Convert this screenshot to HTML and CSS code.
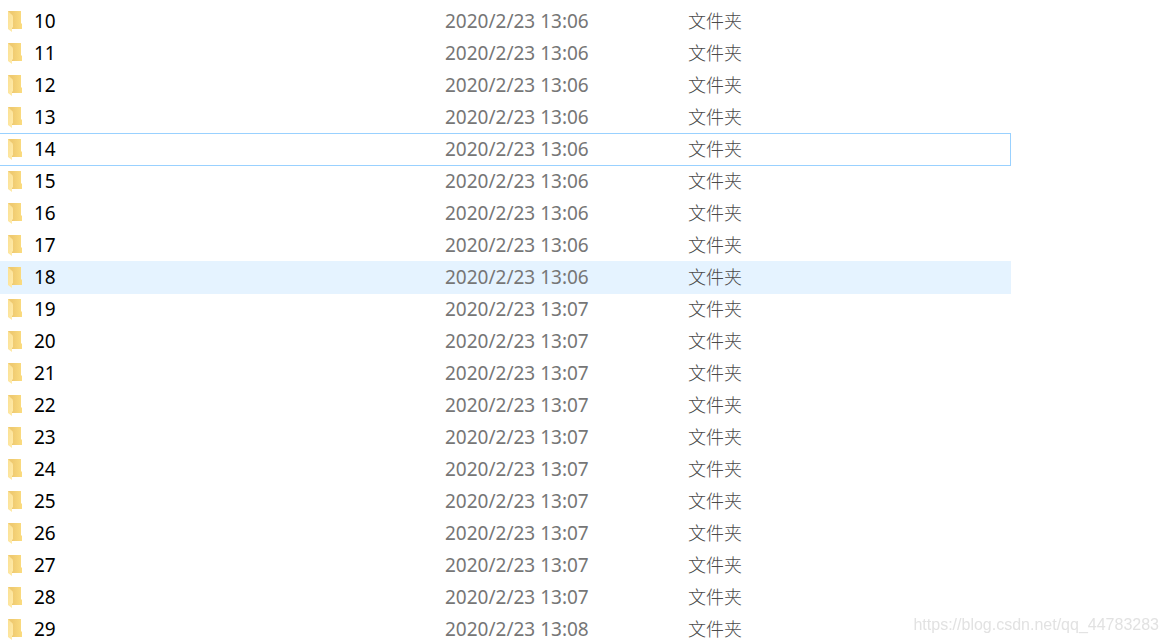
FILE: index.html
```html
<!DOCTYPE html>
<html lang="zh-CN">
<head>
    <meta charset="UTF-8">
    <meta name="viewport" content="width=device-width, initial-scale=1.0">
    <title>文件夹</title>
    <link rel="stylesheet" href="styles.css">
</head>
<body>
    <svg class="defs" aria-hidden="true">
        <defs>
            <linearGradient id="back" x1="0" y1="0" x2="1" y2="0">
                <stop offset="0.3" stop-color="#efca70"/>
                <stop offset="1" stop-color="#fbdc80"/>
            </linearGradient>
            <linearGradient id="front" x1="0" y1="0" x2="1" y2="1">
                <stop offset="0" stop-color="#fbe092"/>
                <stop offset="1" stop-color="#ffebac"/>
            </linearGradient>
            <symbol id="folder" viewBox="0 0 14 22">
                <path d="M0 1H13V13L14 14V19H0z" fill="url(#back)"/>
                <path d="M0 1L3 4Q5 5 5 7V17L4 18V22L0 19z" fill="url(#front)"/>
            </symbol>
        </defs>
    </svg>

    <main class="explorer">
        <table class="files">
            <colgroup>
                <col class="col-name">
                <col class="col-date">
                <col class="col-type">
            </colgroup>
            <tbody id="rows"></tbody>
        </table>
    </main>

    <div class="watermark">https://blog.csdn.net/qq_44783283</div>

    <script>
        const rows = document.getElementById('rows');
        const states = { 14: 'focused', 18: 'hovered' };

        function getTime(name) {
            if (name < 19) return '13:06';
            if (name < 29) return '13:07';
            return '13:08';
        }

        for (let name = 10; name <= 29; name++) {
            const row = document.createElement('tr');
            row.className = states[name] || '';
            row.innerHTML = `
                <td class="name"><svg class="icon" aria-hidden="true"><use href="#folder"/></svg>${name}</td>
                <td class="date">2020/2/23 ${getTime(name)}</td>
                <td class="type">文件夹</td>`;
            rows.appendChild(row);
        }
    </script>
</body>
</html>
```
FILE: styles.css
```css
body {
    margin: 0;
    background-color: #fff;
    color: #6d6d6d;
    font-family: "Noto Sans", "Noto Sans CJK SC", sans-serif;
    font-size: 19px;
    overflow: hidden;
}

.defs {
    position: absolute;
    width: 0;
    height: 0;
}

.explorer {
    padding: 5px 157px 0 0;
}

.files {
    width: 100%;
    table-layout: fixed;
    border-collapse: separate;
    border-spacing: 0;
}

.col-name {
    width: 445px;
}

.col-date {
    width: 243px;
}

.files td {
    height: 32px;
    padding: 0;
    line-height: 32px;
    white-space: nowrap;
}

.files .name {
    display: flex;
    align-items: center;
    gap: 12px;
    padding-left: 8px;
    color: #000;
}

.files .date {
    color: #767676;
}

.files .type {
    color: #4a4a4a;
    font-family: "Noto Sans CJK SC", sans-serif;
    font-size: 18px;
    font-weight: 300;
    line-height: 30px;
    vertical-align: top;
}

.icon {
    width: 14px;
    height: 22px;
}

.focused {
    box-shadow: inset -1px 1px #99d1ff, 0 1px #99d1ff;
}

.hovered {
    background-color: #e5f3ff;
    box-shadow: 0 1px #e5f3ff;
}

.watermark {
    position: fixed;
    right: 9px;
    bottom: 8px;
    color: #e2e2e2;
    font-family: "Liberation Sans", Arial, sans-serif;
    font-size: 16px;
    line-height: 20px;
}
```
